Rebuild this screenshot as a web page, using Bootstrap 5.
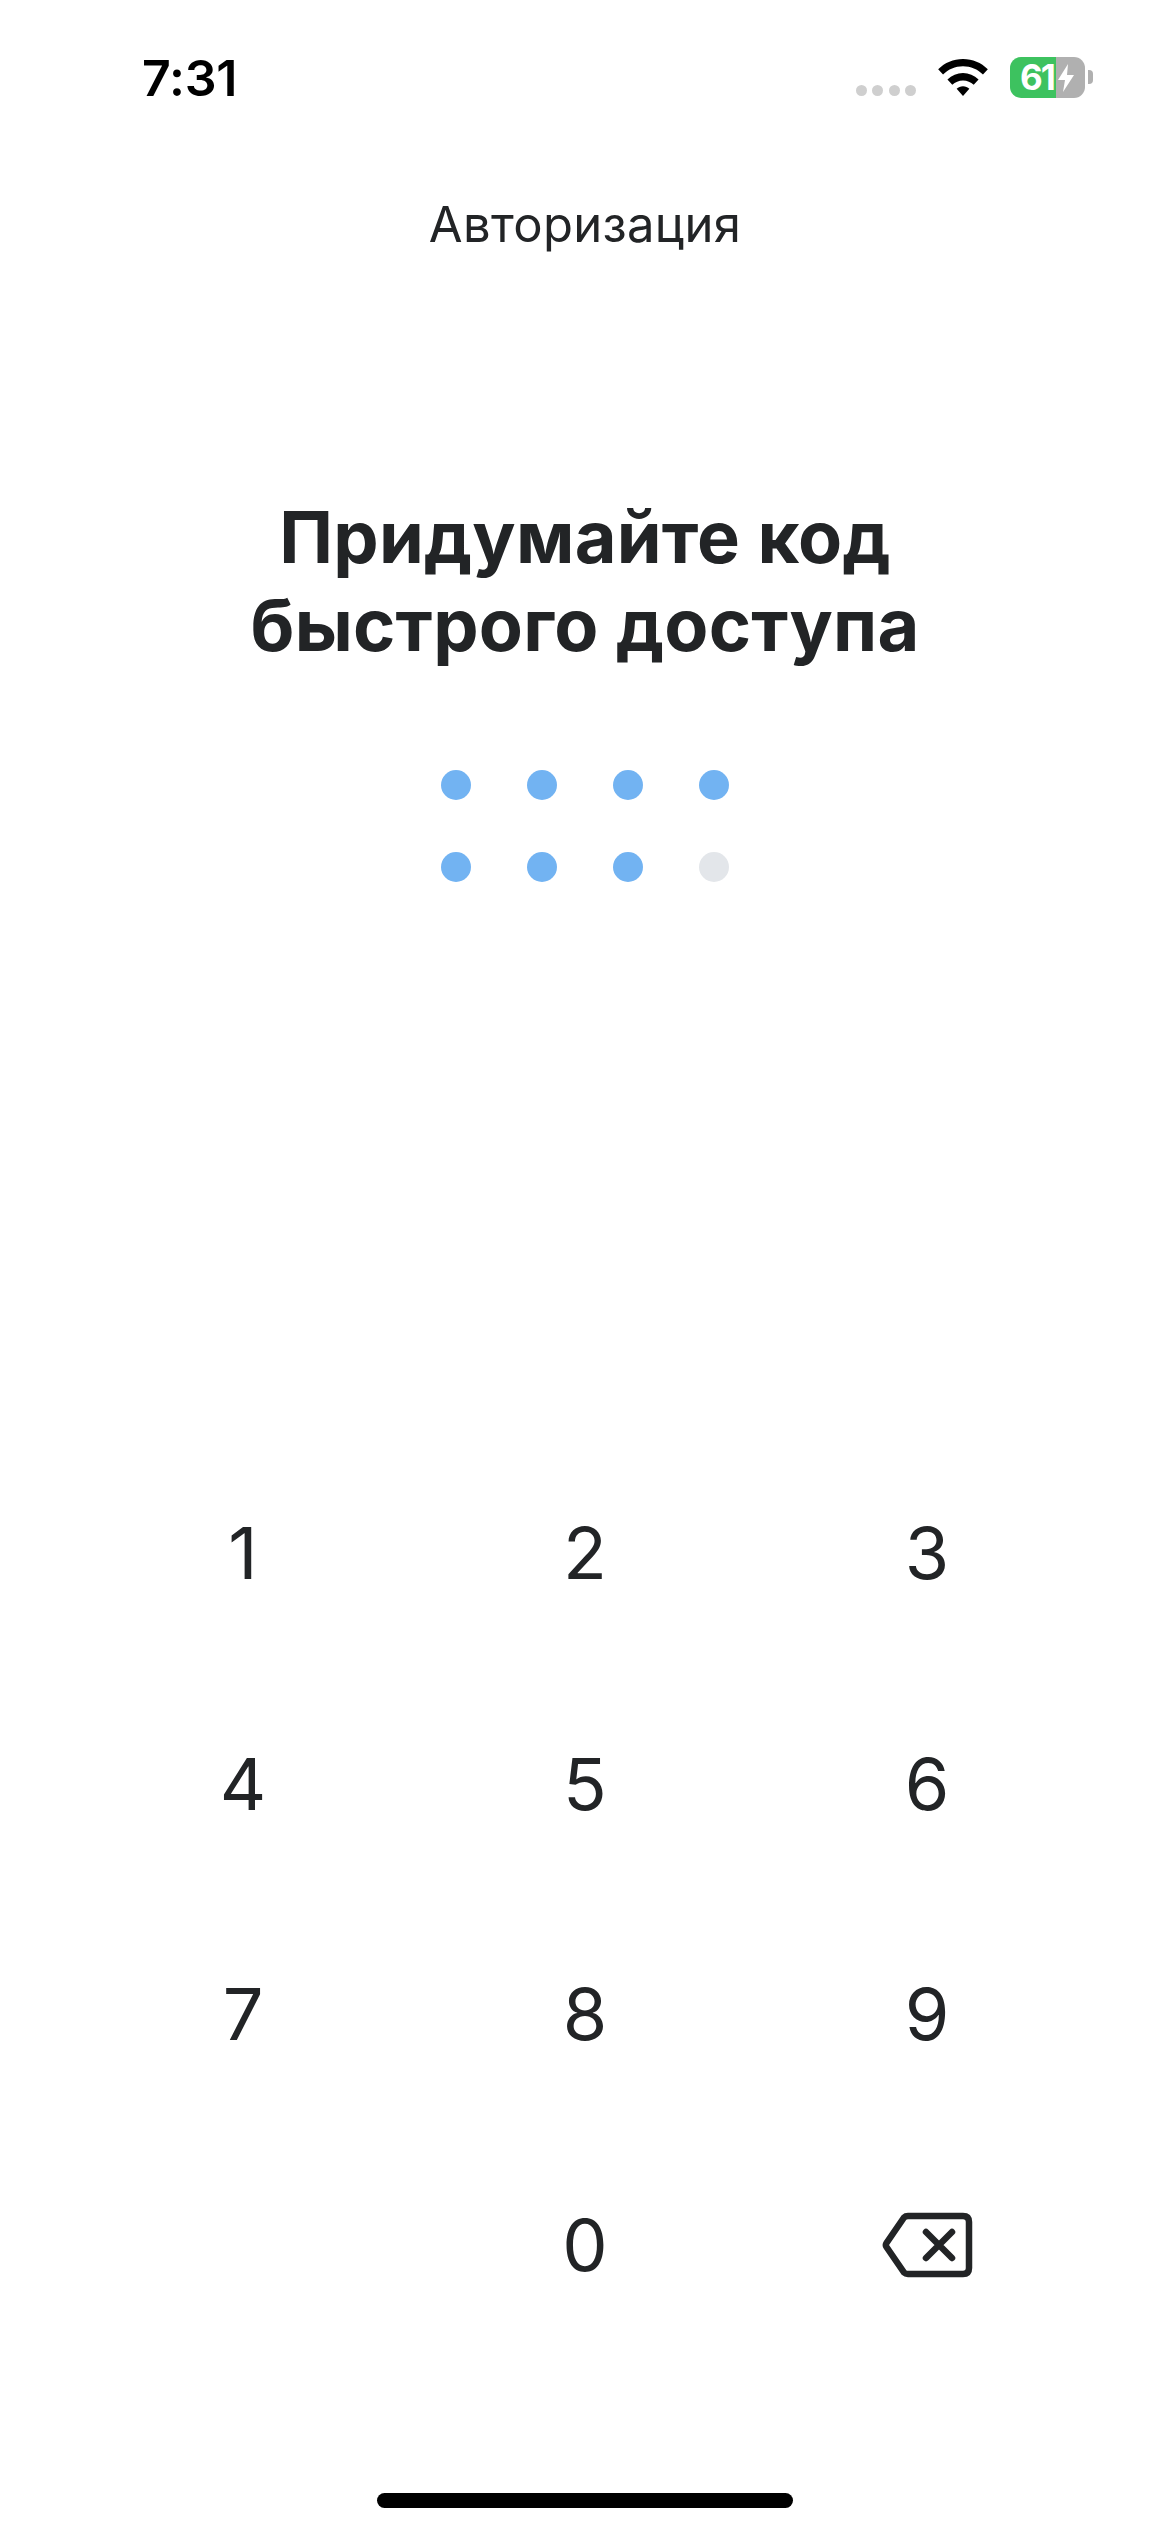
<!DOCTYPE html>
<html lang="ru">

<head>
    <meta charset="UTF-8" />
    <meta name="viewport" content="width=device-width, initial-scale=1.0" />
    <title>Авторизация</title>
    <link href="https://cdn.jsdelivr.net/npm/bootstrap@5.3.3/dist/css/bootstrap.min.css" rel="stylesheet">
    <style>
        body { font-family: Inter, "Noto Sans", sans-serif; color: #222426; background: #fff; }
        .screen { width: 1170px; height: 2532px; overflow: hidden; }
        .status-bar { height: 100px; padding: 53px 77px 0 142px; }
        .clock { font-size: 50px; line-height: 50px; font-weight: 600; color: #000; letter-spacing: -.2px; }
        .signal-dots { gap: 5.5px; margin: 32px 21px 0 0; }
        .signal-dots span { width: 11px; height: 11px; border-radius: 50%; background: #cfcfcf; }
        .wifi-icon { width: 52px; height: 37px; margin: 6px 21px 0 0; }
        .battery { width: 75px; height: 41px; margin-top: 4px; border-radius: 11px; background: linear-gradient(90deg, #3dc25f 46px, #b0b0b0 46px); color: #fff; font-size: 35px; line-height: 41px; font-weight: 700; padding-left: 10px; letter-spacing: -2px; }
        .battery svg { width: 20px; height: 30px; margin-left: 2px; }
        .battery-nub { width: 5px; height: 14px; margin: 17px 0 0 3px; border-radius: 0 4px 4px 0; background: #b0b0b0; }
        .page-title { font-size: 49px; line-height: 56px; margin-top: 97px; letter-spacing: .3px; }
        .heading { font-size: 72px; line-height: 88px; font-weight: 700; margin: 240px 0 0; letter-spacing: .25px; }
        .code-dots { grid-template-columns: repeat(4, 30px); column-gap: 56px; row-gap: 52px; margin-top: 101px; }
        .code-dots span { width: 30px; height: 30px; border-radius: 50%; background: #72b3f2; }
        .code-dots span.empty { background: #e3e6ea; }
        .keypad { grid-template-columns: repeat(3, 342px); grid-auto-rows: 230.6px; margin-top: 556px; }
        .key { font-size: 72px; line-height: 1; color: #222426; background: none; border: 0; padding: 0; }
        .backspace-icon { width: 92px; height: 68px; }
        .home-bar { width: 416px; height: 15px; border-radius: 8px; background: #000; margin-top: 133px; }
    </style>
</head>

<body>

    <div class="screen d-flex flex-column">
        <div class="status-bar d-flex align-items-start flex-shrink-0">
            <div class="clock">7:31</div>
            <div class="signal-dots d-flex ms-auto"><span></span><span></span><span></span><span></span></div>
            <svg class="wifi-icon" viewBox="0 0 52 38">
                <path d="M26 0C16 0 7.500 3.700 0.500 10.500L5.500 16C11 10.500 18 7.500 26 7.500S41 10.500 46.500 16L51.500 10.500C44.500 3.700 36 0 26 0Z" fill="#000" />
                <path d="M26 14.500C20 14.500 14.500 17 10 21L15 26.500C18 23.700 21.700 22 26 22S34 23.700 37 26.500L42 21C37.500 17 32 14.500 26 14.500Z" fill="#000" />
                <path d="M26 28C23.500 28 21.200 29 19.500 30.500L26 38L32.500 30.500C30.800 29 28.500 28 26 28Z" fill="#000" />
            </svg>
            <div class="battery d-flex align-items-center">
                <span>61</span>
                <svg viewBox="0 0 20 30"><path d="M12 1L2 17H9L7 29L18 12H11Z" fill="#fff" /></svg>
            </div>
            <div class="battery-nub"></div>
        </div>

        <div class="page-title text-center">Авторизация</div>

        <h1 class="heading text-center">Придумайте код<br>быстрого доступа</h1>

        <div class="code-dots d-grid justify-content-center">
            <span></span><span></span><span></span><span></span>
            <span></span><span></span><span></span><span class="empty"></span>
        </div>

        <div class="keypad d-grid justify-content-center">
            <button class="key">1</button>
            <button class="key">2</button>
            <button class="key">3</button>
            <button class="key">4</button>
            <button class="key">5</button>
            <button class="key">6</button>
            <button class="key">7</button>
            <button class="key">8</button>
            <button class="key">9</button>
            <div></div>
            <button class="key">0</button>
            <button class="key d-flex align-items-center justify-content-center" aria-label="Удалить">
                <svg class="backspace-icon" viewBox="0 0 92 68" fill="none" stroke="#222426" stroke-linecap="round" stroke-linejoin="round">
                    <path d="M27 5H82C86 5 88 7 88 11V57C88 61 86 63 82 63H27C25 63 24 62.500 23 61.500L5.500 36C4.500 34.500 4.500 33.500 5.500 32L23 6.500C24 5.500 25 5 27 5Z" stroke-width="6.500" />
                    <path d="M45 21L71 47M71 21L45 47" stroke-width="6.500" />
                </svg>
            </button>
        </div>

        <div class="home-bar align-self-center"></div>
    </div>

</body>

</html>
